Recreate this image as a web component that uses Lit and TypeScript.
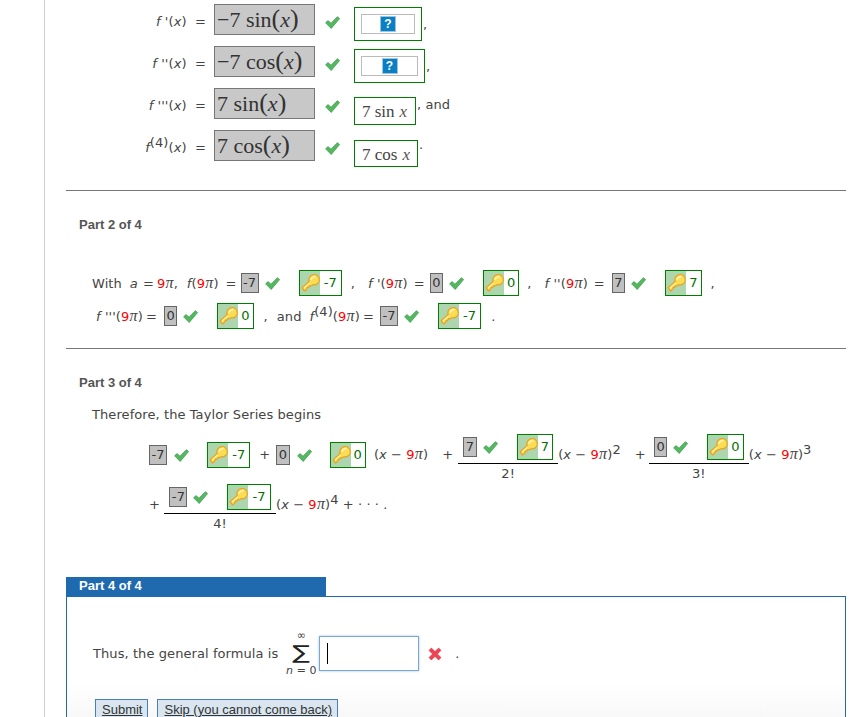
import { LitElement, html, css, TemplateResult } from "lit";
import { customElement } from "lit/decorators.js";

const check = html`<svg class="check" viewBox="0 0 15 13" width="15" height="13"><path d="M0.6 6.8 L3 4.6 L6 7.2 L12.4 0.7 L14.6 2.6 L6.2 12.5 Z" fill="#55b85f" stroke="#2f9a48" stroke-width=".7" stroke-linejoin="round"/></svg>`;

const key = html`<svg class="key" viewBox="0 0 20 20" width="20" height="20"><path d="M2.2 14.8 L9.2 8.4 A5.2 5.2 0 1 1 13 11.8 L10.8 13 L9.6 12.6 L8.9 14.4 L7.3 14.2 L6.8 16 L4.6 18.2 Z" fill="#fbdc55" stroke="#e9a21c" stroke-width="1.2" stroke-linejoin="round"/><path d="M11 6.4 Q12.4 3.6 15 3.6" stroke="#fff2ad" stroke-width="1.6" fill="none" stroke-linecap="round"/><path d="M4 15 L9.6 10" stroke="#fff2ad" stroke-width="1.1" fill="none"/></svg>`;

const nine = html`<span class="red">9</span><i class="pi">π</i>`;
const g = (n: number) => html`<span class="g g${n}"></span>`;

function ans(v: string): TemplateResult {
  return html`<span class="ans"><span class="given">${v}</span>${check}<span class="keybox"><span class="keyside">${key}</span><span class="keyval ${v.length > 1 ? "w" : ""}">${v}</span></span></span>`;
}

function bigRow(label: TemplateResult, math: TemplateResult, answer: TemplateResult, after: TemplateResult | string = "") {
  return html`<div class="brow"><span class="blabel">${label}</span><span class="bigbox">${math}</span>${check}${answer}${after}</div>`;
}

function help(w: string) {
  return html`<span class="helpouter ${w}"><span class="helpinner"><span class="help">?</span></span></span>`;
}

const xm = html`(<i>x</i> − ${nine})`;

@customElement("app-root")
export class AppRoot extends LitElement {
  static styles = css`
    :host { display: block; width: 862px; height: 717px; overflow: hidden; background: #fff; position: relative;
      font-family: "DejaVu Sans", Verdana, sans-serif; font-size: 13px; letter-spacing: .08px; color: #444; }
    * { box-sizing: border-box; }
    .page { margin-left: 44px; border-left: 1px solid #cfcfcf; padding-left: 21px; padding-top: 4px; height: 717px; width: 802px; overflow: hidden; }
    i { font-style: italic; }
    .red { color: #f00; }
    .pi { display: inline-block; width: 8.4px; text-align: center; font: italic 16px/10px "Liberation Serif", serif; letter-spacing: 0; }
    .g { display: block; flex: none; }
    .g3 { width: 3px; } .g4 { width: 4px; } .g5 { width: 5px; } .g6 { width: 6px; } .g7 { width: 7px; } .g8 { width: 8px; }
    .g9 { width: 9px; } .g10 { width: 10px; } .g12 { width: 12px; } .g13 { width: 13px; } .g14 { width: 14px; }

    .brow { display: flex; align-items: flex-start; height: 31px; margin-bottom: 11px; }
    .blabel { width: 140px; text-align: right; padding-top: 10px; line-height: 16px; white-space: nowrap; }
    .bigbox { width: 101px; height: 31px; margin-left: 8px; background: #c8c8c8; border: 1px solid #777; font-family: "Liberation Serif", serif;
      font-size: 22px; line-height: 27px; padding-left: 2px; white-space: nowrap; color: #333; letter-spacing: 0; }
    .bigbox .par { font-size: 26px; font-weight: 300; }
    .brow .check { margin: 12px 14px 0 10px; }
    .helpouter { display: flex; align-items: center; justify-content: center; height: 34px; border: 1px solid #008000; padding: 0 6px; margin-top: 3px; }
    .helpouter.a { width: 68px; }
    .helpouter.b { width: 71px; }
    .helpinner { display: flex; align-items: center; justify-content: center; width: 100%; height: 20px; border: 1px solid #bbb; background: #fff; }
    .help { width: 14px; height: 14px; background: #0a7fc4; outline: 1px solid #9cc6e6; color: #fff; font: bold 12px/14px "Liberation Sans", sans-serif; text-align: center; display: block; }
    .mbox { display: block; height: 28px; border: 1px solid #008000; font-family: "Liberation Serif", serif; font-size: 17px; line-height: 28px; padding-left: 7px; margin-top: 9px; white-space: nowrap; color: #444; letter-spacing: 0; }
    .mbox.s { width: 62px; }
    .mbox.c { width: 64px; height: 27px; margin-top: 10px; line-height: 28px; }
    .mbox b { font-weight: 400; font-style: italic; margin-left: 5px; color: #555; }
    .after { margin-left: 1px; line-height: 16px; margin-top: 13px; }
    .after.t { margin-top: 7px; }
    .after.u { margin-top: 9px; }

    .rule { border: 0; border-top: 1px solid #777; margin: 0; width: 780px; }
    .r1 { margin-top: 29px; }
    .head { font: bold 13px/14px "Liberation Sans", sans-serif; letter-spacing: 0; color: #555; margin-left: 13px; }
    .h2 { margin-top: 27px; }
    .line { display: flex; align-items: center; white-space: nowrap; }
    .l21 { margin: 38px 0 0 26px; height: 26px; }
    .l22 { margin: 7px 0 0 30px; height: 26px; }
    .r2 { margin-top: 19px; }
    .h3 { margin-top: 27px; }
    .t3 { margin: 17px 0 0 26px; line-height: 16px; }

    .ans { display: inline-flex; align-items: center; }
    .given { display: block; height: 20px; min-width: 13px; padding: 0 1.5px; background: #c0c0c0; border: 1px solid #666; line-height: 18px; text-align: center; color: #333; }
    .ans .check { margin: 0 19px 0 6px; }
    .keybox { display: inline-flex; height: 26px; border: 1px solid #008000; align-items: stretch; }
    .keyside { width: 20px; background: #aed6ae; display: flex; align-items: center; justify-content: center; }
    .keyval { background: #fff; color: #007000; padding: 0 3px; line-height: 24px; }
    .keyval.w { padding: 0 4px; }
    sup { font-size: 13px; line-height: 0; vertical-align: 5px; }

    .l31 { margin: 11px 0 0 83px; height: 50px; align-items: flex-start; }
    .l32 { margin: 0 0 0 83px; height: 50px; align-items: flex-start; }
    .l31 > .ans { margin-top: 8px; }
    .l31 > .ans .check { margin: 0 18px 0 7px; }
    .tx { line-height: 26px; margin-top: 8px; flex: none; }
    .frac { display: flex; flex-direction: column; align-items: center; flex: none; }
    .num { display: flex; align-items: center; height: 26px; }
    .bar { width: 100%; height: 1px; background: #000; margin-top: 3px; }
    .den { line-height: 16px; margin-top: 2px; font-size: 13px; }
    .f1 { width: 100px; }
    .f2 { width: 112px; }

    .tab { width: 260px; height: 19px; background: #1f6aae; color: #fff; font: bold 13px/18px "Liberation Sans", sans-serif; letter-spacing: 0; padding-left: 13px; margin-top: 43px; }
    .panel { border: 1px solid #1f6aae; border-bottom: 0; width: 780px; height: 170px; padding-left: 26px; background: linear-gradient(#fff 85px, #f8f8f8 121px); }
    .form { display: flex; align-items: center; margin-top: 36px; height: 40px; }
    .sigma { display: flex; flex-direction: column; align-items: center; width: 30px; margin-left: 8px; flex: none; }
    .sigma .inf { font-size: 11px; line-height: 12px; height: 12px; }
    .sigma .sym { display: block; font: 26px/22px "DejaVu Sans", sans-serif; height: 22px; color: #222; letter-spacing: 0; transform: scaleY(.72); }
    .sigma .low { font-size: 11px; line-height: 12px; margin-top: 1px; white-space: nowrap; }
    .input { width: 100px; height: 35px; border: 1px solid #7aa7d6; box-shadow: 0 0 2px #9cc2e8; margin-left: 3px; padding: 6px 7px; background: #fff; flex: none; }
    .input span { display: block; width: 1px; height: 21px; background: #000; }
    .x { margin: 1px 13px 0 9px; flex: none; }
    .btns { display: flex; gap: 9px; margin: 26px 0 0 2px; }
    .btn { border: 1px solid #4a7fb0; background: #d9e6f0; height: 24px; padding: 0 5px 0 6px; font: 13px/19px "Liberation Sans", sans-serif; letter-spacing: 0; color: #333; text-decoration: underline; }
  `;

  render() {
    return html`<div class="page">
      ${bigRow(html`<i>f</i> '(<i>x</i>) &nbsp;=`, html`−7 sin<span class="par">(</span><i>x</i><span class="par">)</span>`, help("a"), html`<span class="after">,</span>`)}
      ${bigRow(html`<i>f</i> ''(<i>x</i>) &nbsp;=`, html`−7 cos<span class="par">(</span><i>x</i><span class="par">)</span>`, help("b"), html`<span class="after">,</span>`)}
      ${bigRow(html`<i>f</i> '''(<i>x</i>) &nbsp;=`, html`7 sin<span class="par">(</span><i>x</i><span class="par">)</span>`, html`<span class="mbox s">7 sin<b>x</b></span>`, html`<span class="after u">, and</span>`)}
      ${bigRow(html`<i>f</i><sup>(4)</sup>(<i>x</i>) &nbsp;=`, html`7 cos<span class="par">(</span><i>x</i><span class="par">)</span>`, html`<span class="mbox c">7 cos<b>x</b></span>`, html`<span class="after t">.</span>`)}
      <hr class="rule r1" />
      <div class="head h2">Part 2 of 4</div>
      <div class="line l21">
        <span>With</span>${g(8)}<span><i>a</i></span>${g(5)}<span>=</span>${g(3)}<span>${nine},</span>${g(9)}<span><i>f</i>(${nine})</span>${g(7)}<span>=</span>${g(4)}${ans("-7")}${g(9)}<span>,</span>${g(13)}
        <span><i>f</i> '(${nine})</span>${g(6)}<span>=</span>${g(5)}${ans("0")}${g(8)}<span>,</span>${g(13)}
        <span><i>f</i> ''(${nine})</span>${g(6)}<span>=</span>${g(7)}${ans("7")}${g(9)}<span>,</span>
      </div>
      <div class="line l22">
        <span><i>f</i> '''(${nine})</span>${g(3)}<span>=</span>${g(7)}${ans("0")}${g(10)}<span>,</span>${g(9)}<span>and</span>${g(8)}
        <span><i>f</i><sup>(4)</sup>(${nine})</span>${g(3)}<span>=</span>${g(6)}${ans("-7")}${g(10)}<span>.</span>
      </div>
      <hr class="rule r2" />
      <div class="head h3">Part 3 of 4</div>
      <div class="t3">Therefore, the Taylor Series begins</div>
      <div class="line l31">
        ${ans("-7")}${g(9)}<span class="tx">+</span>${g(6)}${ans("0")}${g(8)}<span class="tx">${xm}</span>${g(14)}<span class="tx">+</span>${g(5)}
        <span class="frac f1"><span class="num">${ans("7")}</span><span class="bar"></span><span class="den">2!</span></span>
        <span class="tx">${xm}<sup>2</sup></span>${g(14)}<span class="tx">+</span>${g(3)}
        <span class="frac f1"><span class="num">${ans("0")}</span><span class="bar"></span><span class="den">3!</span></span>
        <span class="tx">${xm}<sup>3</sup></span>
      </div>
      <div class="line l32">
        <span class="tx">+</span>${g(4)}
        <span class="frac f2"><span class="num">${ans("-7")}</span><span class="bar"></span><span class="den">4!</span></span>
        <span class="tx">${xm}<sup>4</sup> + · · · .</span>
      </div>
      <div class="tab">Part 4 of 4</div>
      <div class="panel">
        <div class="form">Thus, the general formula is
          <span class="sigma"><span class="inf">∞</span><span class="sym">∑</span><span class="low"><i>n</i> = 0</span></span>
          <span class="input"><span></span></span>
          <svg class="x" viewBox="0 0 14 14" width="14" height="14"><path d="M1 3.4 L3.4 1 L7 4.6 L10.6 1 L13 3.4 L9.4 7 L13 10.6 L10.6 13 L7 9.4 L3.4 13 L1 10.6 L4.6 7 Z" fill="#ee4455" stroke="#d92b3a" stroke-width=".6"/></svg>.
        </div>
        <div class="btns"><span class="btn">Submit</span><span class="btn">Skip (you cannot come back)</span></div>
      </div>
    </div>`;
  }
}
